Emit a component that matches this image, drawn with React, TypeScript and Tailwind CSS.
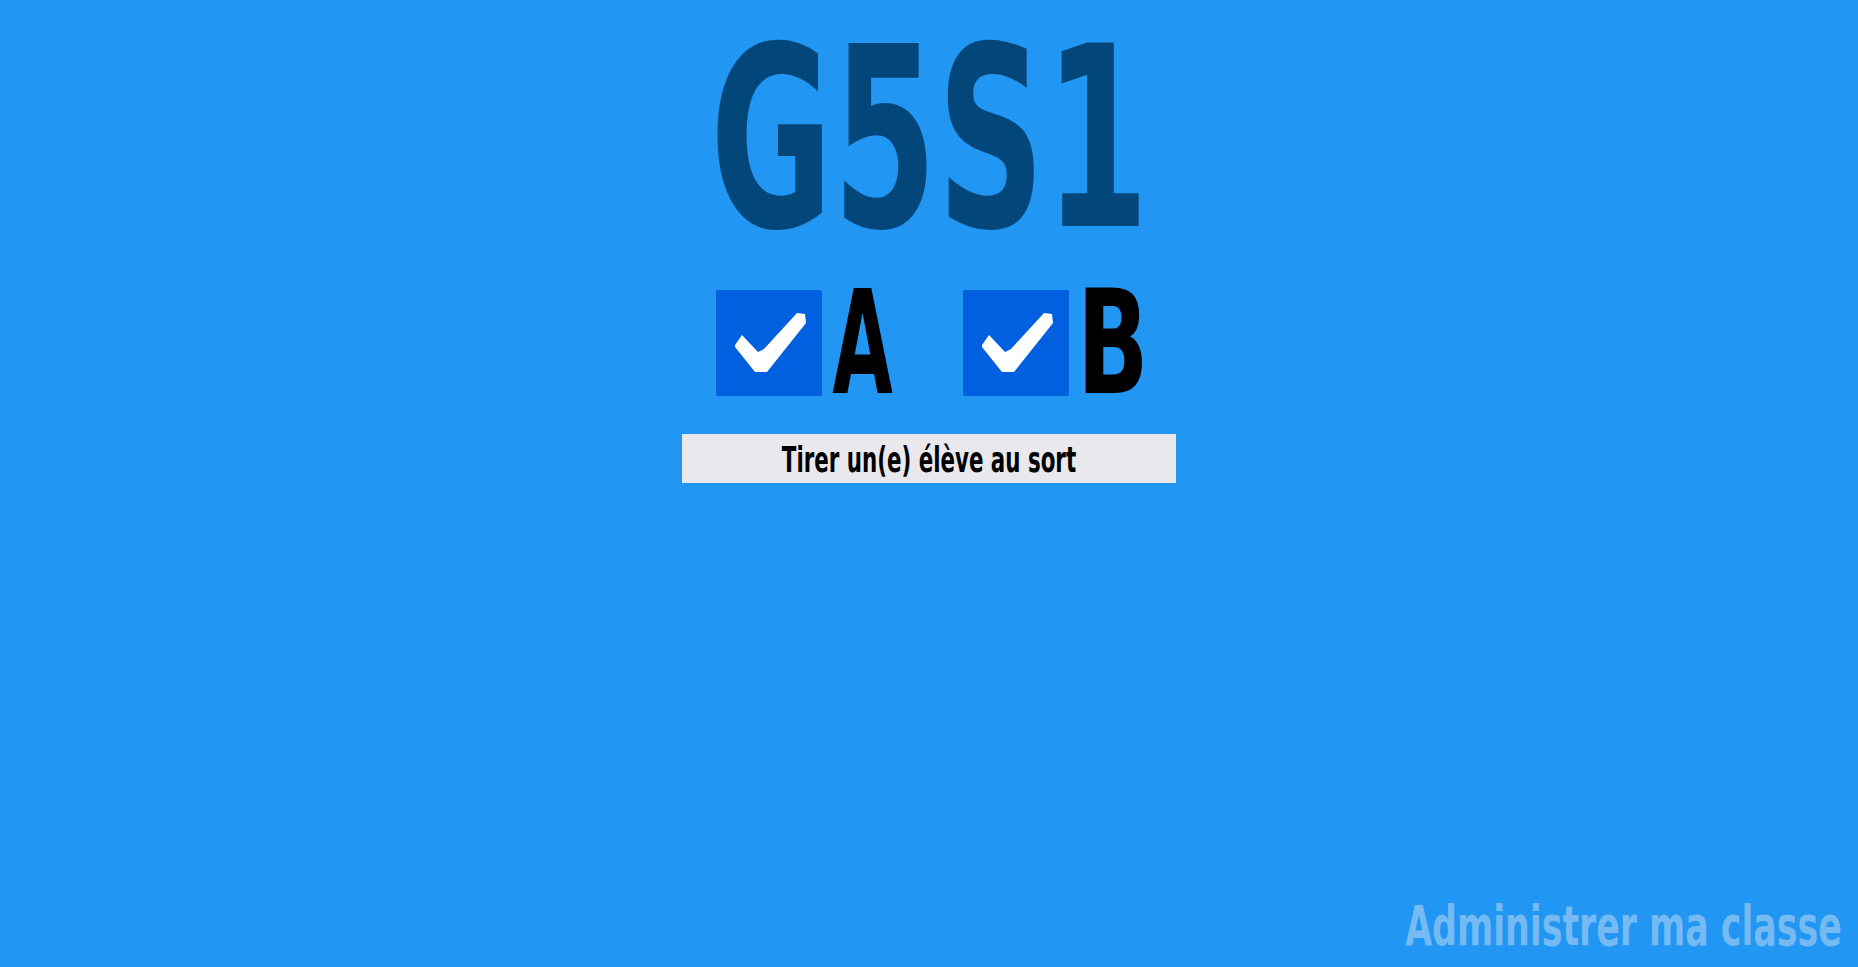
import { useState } from 'react';

function CheckBox({ checked, onToggle }: { checked: boolean; onToggle: () => void }) {
  return (
    <button
      type="button"
      onClick={onToggle}
      className="w-[106px] h-[106px] rounded-[2px] bg-[#0060df] shrink-0"
    >
      {checked && (
        <svg viewBox="0 0 106 106" className="w-full h-full">
          <polygon
            fill="#fff"
            points="19,55 26,45 42,62 48,59 81,23 89,24 90,33 51,82 39,82 19,57"
          />
        </svg>
      )}
    </button>
  );
}

export default function App() {
  const [groupA, setGroupA] = useState(true);
  const [groupB, setGroupB] = useState(true);

  return (
    <div className="min-h-screen bg-[#2196f3] flex flex-col [font-family:'DejaVu_Sans_Condensed','Liberation_Sans',sans-serif] font-bold">
      <main className="flex flex-col items-center pt-[13px]">
        <h1 className="text-[252px] leading-none text-[#03467a] scale-x-[0.66] whitespace-nowrap">G5S1</h1>

        {/* Groups */}
        <div className="flex items-center mt-[25px]">
          <CheckBox checked={groupA} onToggle={() => setGroupA(!groupA)} />
          <div className="w-[61px] ml-[10px] flex justify-center">
            <span className="inline-block text-[145px] leading-[106px] text-black scale-x-[0.6]">A</span>
          </div>
          <div className="w-[70px]" />
          <CheckBox checked={groupB} onToggle={() => setGroupB(!groupB)} />
          <div className="w-[60px] ml-[14px] flex justify-center">
            <span className="inline-block text-[145px] leading-[106px] text-black scale-x-[0.72]">B</span>
          </div>
        </div>

        <button
          type="button"
          className="mt-[38px] w-[494px] h-[49px] pt-[2px] bg-[#e9e8ed] flex justify-center"
        >
          <span className="inline-block text-[36px] leading-[47px] text-black scale-x-[0.66] whitespace-nowrap">
            Tirer un(e) élève au sort
          </span>
        </button>
      </main>

      <footer className="mt-auto flex justify-end pr-[16px] pb-[13px]">
        <a href="#" className="inline-block text-[56px] leading-none text-[#76baf3] scale-x-[0.69] origin-right whitespace-nowrap">
          Administrer ma classe
        </a>
      </footer>
    </div>
  );
}
